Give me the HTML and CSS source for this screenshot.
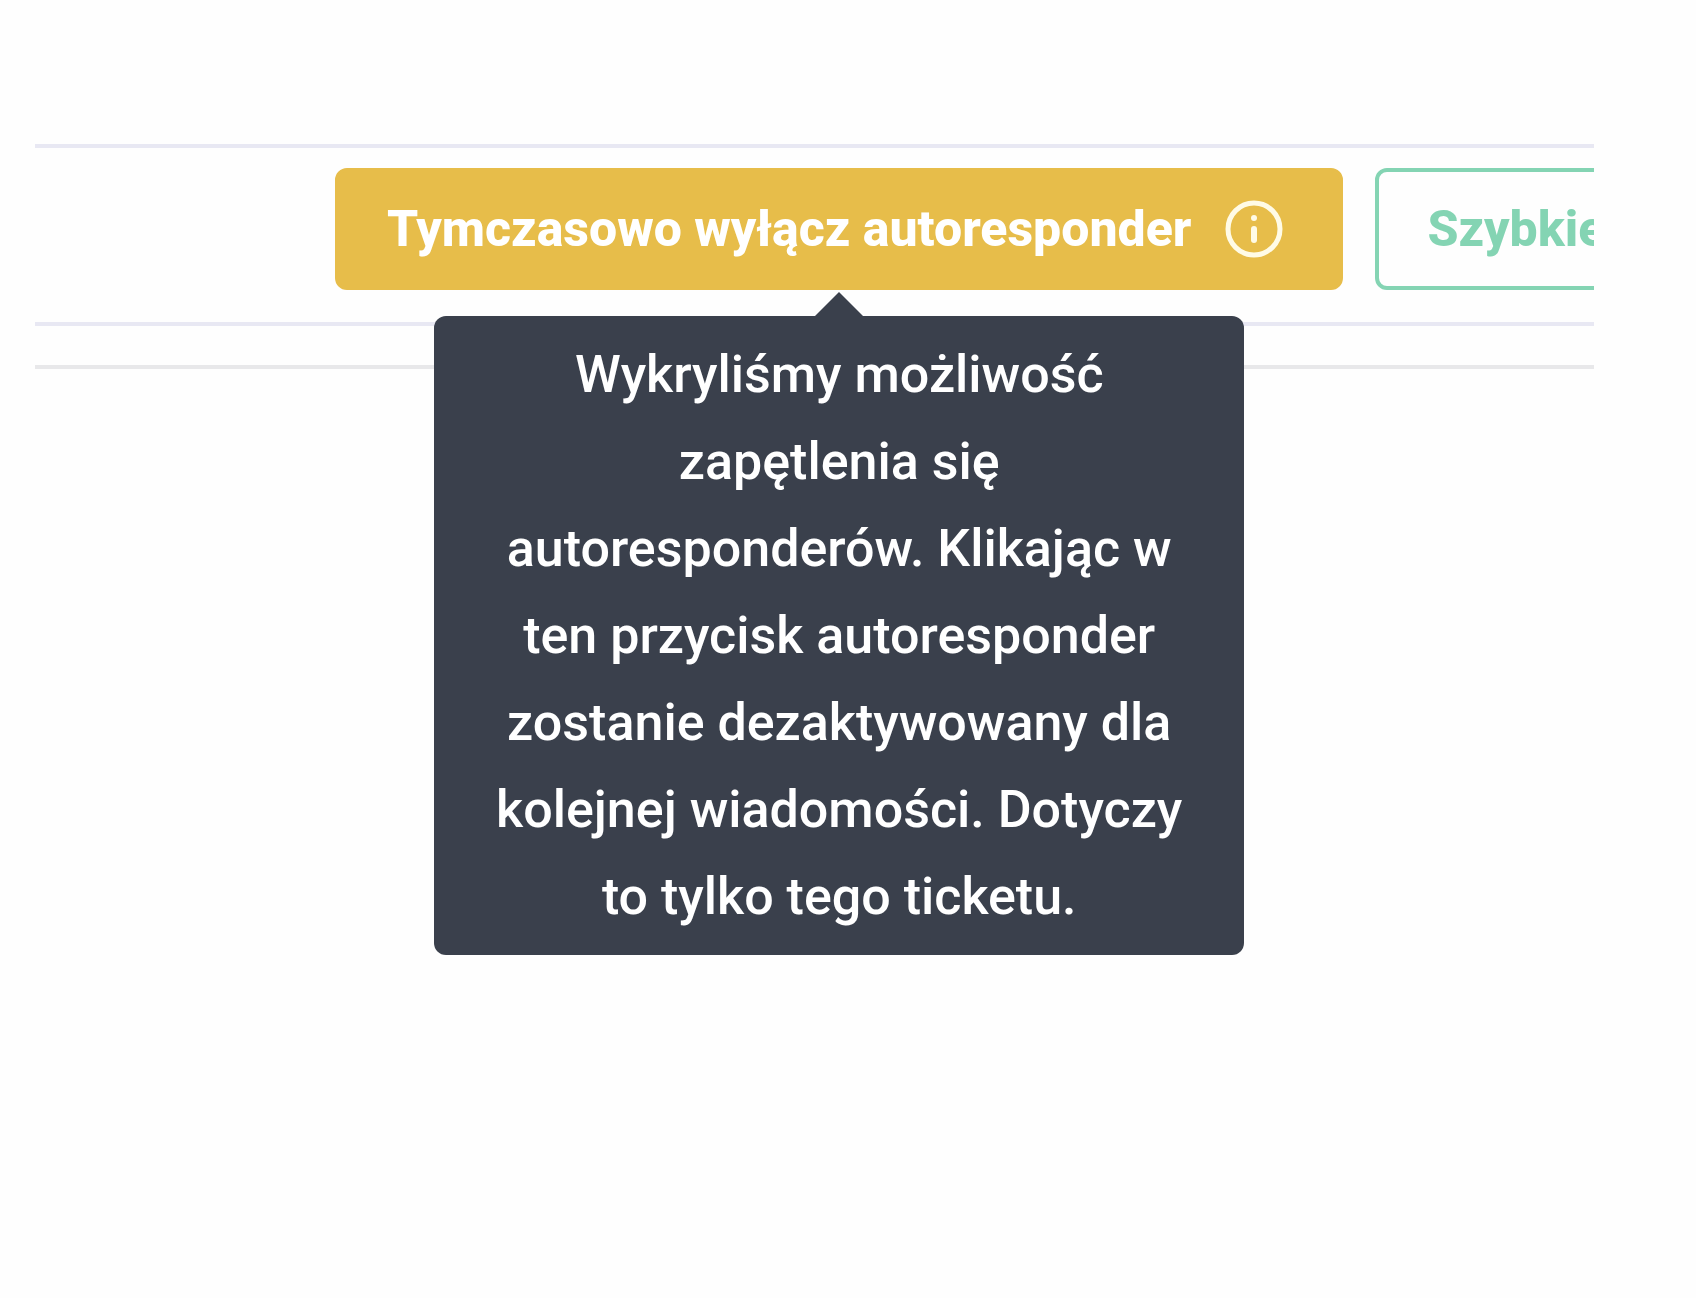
FILE: index.html
```
<!DOCTYPE html>
<html lang="pl">

<head>
  <meta charset="utf-8">
  <title>Autoresponder</title>
  <link rel="stylesheet" href="styles.css">
</head>

<body>

  <main class="ticket">
    <div class="toolbar">
      <div class="tooltip-wrap">
        <button class="button button-warning" type="button" aria-describedby="autoresponder-tip">
          Tymczasowo wyłącz autoresponder
          <svg class="info-icon" viewBox="0 0 58 58" aria-hidden="true">
            <circle cx="29" cy="29" r="26" fill="none" stroke="currentColor" stroke-width="5" />
            <circle cx="29" cy="18" r="3" fill="currentColor" />
            <path d="M29 29v11" stroke="currentColor" stroke-width="6" stroke-linecap="round" />
          </svg>
        </button>
        <div class="tooltip" id="autoresponder-tip" role="tooltip">
          Wykryliśmy możliwość zapętlenia się autoresponderów. Klikając w ten przycisk autoresponder zostanie dezaktywowany dla kolejnej wiadomości. Dotyczy to tylko tego ticketu.
        </div>
      </div>
      <div class="more-actions">
        <button class="button button-outline" type="button">Szybkie</button>
      </div>
    </div>
    <div class="content"></div>
  </main>

</body>

</html>
```

FILE: styles.css
```
* {
  box-sizing: border-box;
}

body {
  margin: 0;
  background-color: #fefefe;
  font-family: Roboto, sans-serif;
}

.ticket {
  min-height: 100vh;
  padding: 144px 102px 0 35px;
}

/* Toolbar */
.toolbar {
  display: flex;
  gap: 32px;
  padding: 20px 0 32px 300px;
  border-top: 4px solid #e8e8f3;
  border-bottom: 4px solid #e8e8f3;
}

.more-actions {
  display: flex;
  flex: 1;
  min-width: 0;
  overflow: hidden;
}

.content {
  margin-top: 39px;
  border-top: 4px solid #e8e8ea;
}

/* Buttons */
.button {
  display: flex;
  align-items: center;
  flex-shrink: 0;
  gap: 34px;
  height: 122px;
  padding: 0 48px;
  border: 4px solid;
  border-radius: 12px;
  font-family: inherit;
  font-size: 50px;
  font-weight: 800;
  white-space: nowrap;
  cursor: pointer;
}

.button-warning {
  padding-right: 56px;
  background-color: #e7bd4a;
  border-color: #e7bd4a;
  color: #ffffff;
}

.button-outline {
  background-color: transparent;
  border-color: #84d4b3;
  color: #84d4b3;
}

.info-icon {
  width: 58px;
  height: 58px;
  color: #fffbe6;
}

/* Tooltip */
.tooltip-wrap {
  position: relative;
  flex-shrink: 0;
}

.tooltip {
  position: absolute;
  top: 100%;
  left: 50%;
  z-index: 1;
  width: 810px;
  margin-top: 26px;
  padding: 15px 56px;
  border-radius: 12px;
  background-color: #3a404c;
  color: #ffffff;
  font-size: 52px;
  font-weight: 500;
  line-height: 87px;
  text-align: center;
  transform: translateX(-50%);
}

/* Arrow pointing at the button */
.tooltip::before {
  content: "";
  position: absolute;
  bottom: 100%;
  left: 50%;
  margin-left: -24px;
  border: 24px solid transparent;
  border-top-width: 0;
  border-bottom-color: #3a404c;
}
```
